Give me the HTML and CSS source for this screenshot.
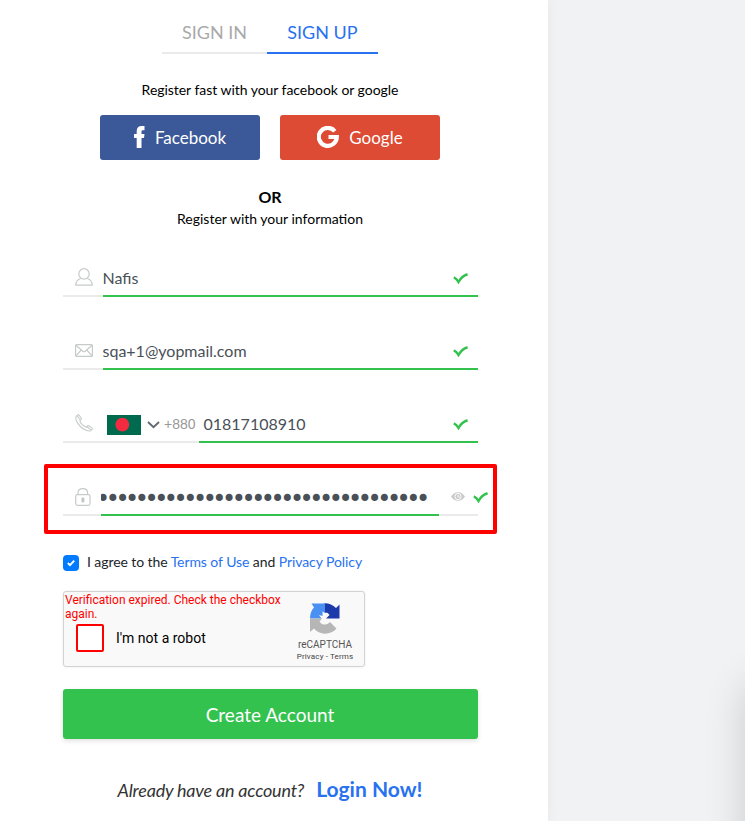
FILE: index.html
```html
<!DOCTYPE html>
<html lang="en">
<head>
<meta charset="utf-8">
<title>Sign up</title>
<link rel="stylesheet" href="styles.css">
</head>
<body>
<svg class="defs" width="0" height="0">
  <symbol id="check" viewBox="0 0 15 11"><path d="M.8 4.400 Q3.600 5.600 5.500 9 Q8.800 3.100 14.600 1.300" fill="none" stroke="#34c24f" stroke-width="2.500"/></symbol>
</svg>
<main class="panel">
  <div class="form">
    <nav class="tabs">
      <a class="tab">SIGN IN</a>
      <a class="tab tab-active">SIGN UP</a>
    </nav>
    <p class="hint">Register fast with your facebook or google</p>
    <div class="social">
      <button class="btn facebook"><svg width="11" height="22" viewBox="0 0 11 22"><path d="M2.700 22V12H0V8h2.700V5.200C2.700 1.800 4.500 0 7.700 0H10.500v4.200H8.900C7.800 4.200 7.500 4.700 7.500 5.700V8h3L10 12H7.500v10z" fill="#fff"/></svg><span>Facebook</span></button>
      <button class="btn google"><svg width="22" height="22" viewBox="0 0 22 22"><path d="M17.800 5.200A9 9 0 1 0 19.800 11H11.500" fill="none" stroke="#fff" stroke-width="4.200"/></svg><span>Google</span></button>
    </div>
    <p class="or">OR</p>
    <p class="info">Register with your information</p>

    <div class="field">
      <div class="lead"><svg width="18" height="18" viewBox="0 0 18 18"><g fill="none" stroke="#c5cbc9" stroke-width="1.200"><circle cx="9" cy="5.900" r="5.200"/><path d="M5.700 10.500C2.500 11.500.8 13.600.8 17.200H17.200C17.200 13.600 15.500 11.500 12.300 10.500"/></g></svg></div>
      <div class="value"><span>Nafis</span><svg class="ok" width="15" height="11"><use href="#check"/></svg></div>
    </div>
    <div class="field">
      <div class="lead"><svg class="mail" width="18" height="13" viewBox="0 0 18 13"><g fill="none" stroke="#c5cbc9" stroke-width="1.200"><rect x=".6" y=".6" width="16.800" height="11.800" rx="1"/><path d="M1 1.200 7.800 7.300Q9 8.200 10.200 7.300L17 1.200M1 11.800 6.200 6M17 11.800 11.800 6"/></g></svg></div>
      <div class="value"><span>sqa+1@yopmail.com</span><svg class="ok" width="15" height="11"><use href="#check"/></svg></div>
    </div>
    <div class="field phone">
      <div class="lead">
        <svg width="18" height="18" viewBox="0 0 18 18"><path d="M2.800.8 1.300 2.200C-.3 4.500 2 9.100 5.400 12.500S13.500 18 15.800 16.600L17.300 15.100Q17.700 14.500 17 13.900L13.700 11.700Q13 11.400 12.400 12L11.300 13.200Q9.500 12.800 7.300 10.700T4.800 6.700L6 5.600Q6.600 5 6.200 4.300L4.100 1Q3.500.3 2.800.8ZM2 1.700 5.400 6M11.900 12.700 16.200 16.100" fill="none" stroke="#c5cbc9" stroke-width="1.100"/></svg>
        <svg class="flag" width="34" height="20" viewBox="0 0 34 20"><path d="M0 0h34v20H0z" fill="#006a4e"/><circle cx="15.300" cy="9.700" r="6.900" fill="#f42a41"/></svg>
        <svg class="arrow" width="13" height="8" viewBox="0 0 13 8"><path d="M1 1 6.500 6.300 12 1" fill="none" stroke="#616b73" stroke-width="1.900"/></svg>
        <span class="code">+880</span>
      </div>
      <div class="value"><span>01817108910</span><svg class="ok" width="15" height="11"><use href="#check"/></svg></div>
    </div>
    <div class="field password">
      <div class="lead"><svg width="16" height="18" viewBox="0 0 16 18"><g fill="none" stroke="#c5cbc9" stroke-width="1.200"><rect x=".7" y="6.700" width="14.300" height="10.600" rx="1.800"/><path d="M3 6.500V5C3 2.300 5 .7 7.800.7S12.600 2.300 12.600 5v1.500"/></g><rect x="6.400" y="9.400" width="3" height="5" rx="1.300" fill="#bfc6c3"/></svg></div>
      <div class="value"><span class="dots">••••••••••••••••••••••••••••••••••</span></div>
      <div class="trail"><svg width="14" height="9" viewBox="0 0 14 9"><path d="M0 4.500Q3 .2 7 .2T14 4.500Q11 8.800 7 8.800T0 4.500Z" fill="#cbc9c9"/><circle cx="7" cy="4.500" r="3.100" fill="none" stroke="#fff" stroke-width="1"/><path d="M7 2.700V5h1.800" fill="none" stroke="#fff" stroke-width=".9"/></svg><svg class="ok" width="15" height="11"><use href="#check"/></svg></div>
      <div class="highlight"></div>
    </div>

    <div class="agree">
      <span class="box"><svg width="8" height="8" viewBox="0 0 8 8"><path d="M.8 4 3 6.100 7.200 1.600" fill="none" stroke="#fff" stroke-width="1.900"/></svg></span>
      <span class="terms">I agree to the <a>Terms of Use</a> and <a>Privacy Policy</a></span>
    </div>

    <div class="captcha">
      <div class="challenge">
        <p class="error">Verification expired. Check the checkbox again.</p>
        <div class="robot"><span class="robot-box"></span><span>I'm not a robot</span></div>
      </div>
      <div class="brand">
        <svg width="32" height="31" viewBox="0 0 32 31"><path d="M16 0V10L13.500 8.500V13L10 12 12.500 15.500H1C1 10.500 2.600 7 5 4.500L2.500 .5H14Z" fill="#4a90f2"/><path d="M16 .2C20 .2 24 1.800 27 5L30.500 1.500V15.500H17L20.500 12C19 9.500 18 9.500 16 9.800Z" fill="#1c3aa9"/><path d="M1 15.500H13L10.500 18.500C12 21 13.500 21.500 16 21.500 18.500 21.500 19.500 20.500 21 19L27.500 25.500C25 28.800 20.500 30.700 16 30.700 11.500 30.700 7.800 28.800 5 25.500L1 29Z" fill="#b6b6b6"/></svg>
        <span class="name">reCAPTCHA</span>
        <span class="legal">Privacy - Terms</span>
      </div>
    </div>

    <button class="btn create">Create Account</button>
    <p class="login"><em>Already have an account?</em><a>Login Now!</a></p>
  </div>
</main>
<aside class="side"><div class="floating"></div></aside>
</body>
</html>
```
FILE: styles.css
```css
* { box-sizing: border-box; }
body {
  margin: 0;
  height: 821px;
  display: flex;
  overflow: hidden;
  background: #f0f2f4;
  font-family: Lato, sans-serif;
  font-size: 14px;
  color: #000;
}
p { margin: 0; }
svg { display: block; flex: none; }
.defs { position: absolute; }
.panel { position: relative; width: 548px; background: #fff; box-shadow: 0 0 12px rgba(0,0,0,.05); padding-left: 63px; }
.form { width: 415px; }
.tabs { display: flex; justify-content: center; height: 54px; padding-top: 10px; margin-left: -1px; }
.tab { width: 105px; text-align: center; font-size: 18px; line-height: 45px; color: #aaa; border-bottom: 2px solid #eaeaea; }
.tab-active { width: 111px; color: #2872f0; border-color: #2872f0; }
.hint { height: 61px; padding-top: 26px; line-height: 20px; text-align: center; letter-spacing: -.04px; margin-left: -1px; }
.social { display: flex; gap: 20px; justify-content: center; margin-left: -1px; }
.btn { border: 0; border-radius: 3px; color: #fff; font: 18px Lato, sans-serif; display: flex; align-items: center; justify-content: center; gap: 10px; padding: 0; }
.social .btn { width: 160px; height: 45px; font-size: 17px; padding-bottom: 1px; }
.social svg { margin-bottom: 1px; }
.facebook { background: #3b5998; }
.google { background: #dd4b34; }
.or { margin-top: 26px; font-size: 16px; font-weight: 700; line-height: 22px; text-align: center; margin-left: -1px; }
.info { line-height: 20px; text-align: center; margin: 1px 0 21px -1px; }
.field { position: relative; display: flex; height: 47px; margin-bottom: 26px; font-size: 16px; color: #495057; }
.lead { width: 40px; padding: 9px 0 0 12px; border-bottom: 2px solid #eaeaea; display: flex; align-items: center; }
.value { flex: 1; display: flex; align-items: center; justify-content: space-between; padding: 10px 10px 0 0; border-bottom: 2px solid #34c24f; min-width: 0; }
.value span { margin: -1px 0 0 -.5px; }
.ok { margin-top: 2px; }
.phone .lead { width: 136px; }
.phone .value { padding-left: 5px; }
.flag { margin: 3px 0 0 14px; }
.arrow { margin: 3px 0 0 6px; }
.code { margin: 1px 0 0 4px; color: #999; font: 14px "Liberation Sans", sans-serif; }
.password { margin-bottom: 0; }
.password .lead { width: 38px; padding-top: 10px; }
.password .value { overflow: hidden; padding-right: 0; }
.value .dots { margin: 4px 0 0; font: 24px/20px "DejaVu Sans", sans-serif; letter-spacing: -4.46px; text-indent: -5px; white-space: nowrap; }
.trail { width: 39px; border-bottom: 2px solid #eaeaea; display: flex; align-items: center; gap: 8px; padding: 10px 0 0 12px; }
.highlight { position: absolute; left: -19px; top: -5px; width: 453px; height: 70px; border: 4px solid #f00; border-radius: 2px; }
.agree { display: flex; align-items: center; gap: 8px; margin-top: 36px; height: 20px; color: #212529; }
.terms { margin-top: -2px; letter-spacing: -.08px; }
.agree a, .login a { color: #2872f0; }
.box { width: 16px; height: 16px; margin-top: 2px; border-radius: 4px; background: #007bff; display: flex; align-items: center; justify-content: center; }
.captcha { display: flex; width: 302px; height: 76px; margin-top: 19px; background: #f9f9f9; border: 1px solid #d3d3d3; border-radius: 3px; box-shadow: 0 0 3px rgba(0,0,0,.08); font-family: Roboto, sans-serif; }
.challenge { width: 222px; padding: 1px 0 0 1px; }
.error { font-size: 12px; line-height: 14px; color: #f00; }
.robot { display: flex; align-items: center; gap: 12px; margin: 3px 0 0 11px; }
.robot-box { width: 28px; height: 28px; border: 2px solid #f00; border-radius: 2px; background: #fff; }
.brand { flex: 1; display: flex; flex-direction: column; align-items: center; padding: 11px 0 0 0; color: #555; }
.name { font-size: 10px; line-height: 13px; margin-top: 4px; }
.legal { font-size: 8px; line-height: 11px; letter-spacing: .15px; color: #444; }
.create { width: 415px; height: 50px; margin-top: 22px; background: #34c24f; font-size: 19px; box-shadow: 0 2px 5px rgba(0,0,0,.12); padding-right: 1px; }
.login { display: flex; align-items: baseline; justify-content: center; gap: 12px; margin-top: 36px; margin-left: -1px; line-height: 28px; color: #333; font-size: 18px; }
.login em { letter-spacing: -.2px; }
.login a { font-size: 21px; font-weight: 700; }
.side { position: relative; flex: 1; overflow: hidden; }
.floating { position: absolute; left: 201px; top: 680px; width: 370px; height: 300px; border-radius: 8px; box-shadow: 0 5px 44px rgba(0,0,0,.19); }
```
